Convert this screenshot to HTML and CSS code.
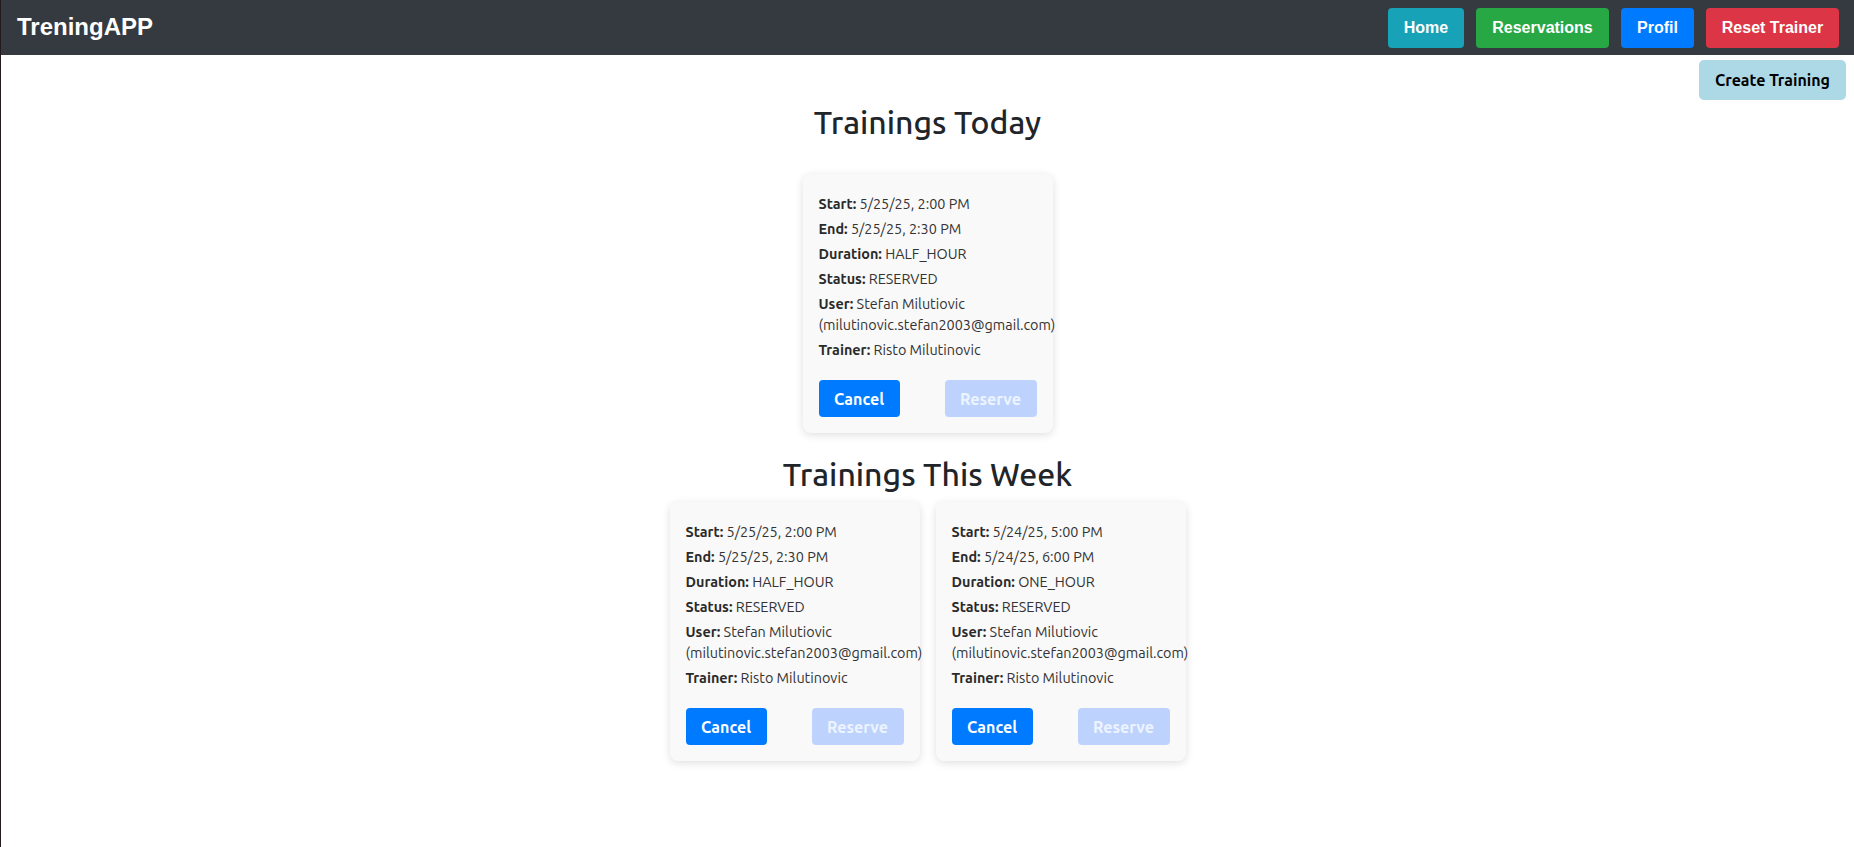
FILE: index.html
```html
<!DOCTYPE html>
<html>
<head>
<meta charset="utf-8">
<title>TreningAPP</title>
<link rel="stylesheet" href="styles.css">
</head>
<body>
<nav class="navbar">
  <div class="brand">TreningAPP</div>
  <div class="nav-buttons">
    <button class="nav-btn btn-home">Home</button>
    <button class="nav-btn btn-res">Reservations</button>
    <button class="nav-btn btn-profil">Profil</button>
    <button class="nav-btn btn-reset">Reset Trainer</button>
  </div>
</nav>
<div class="create-row">
  <button class="create-btn">Create Training</button>
</div>
<main class="main">
  <h2 class="section-title today-title">Trainings Today</h2>
  <div class="cards cards-today">
    <div class="card">
      <p><b>Start:</b> 5/25/25, 2:00 PM</p>
      <p><b>End:</b> 5/25/25, 2:30 PM</p>
      <p><b>Duration:</b> HALF_HOUR</p>
      <p><b>Status:</b> RESERVED</p>
      <p><b>User:</b> Stefan Milutiovic (milutinovic.stefan2003@gmail.com)</p>
      <p><b>Trainer:</b> Risto Milutinovic</p>
      <div class="actions">
        <button class="btn btn-cancel">Cancel</button>
        <button class="btn btn-reserve" disabled>Reserve</button>
      </div>
    </div>
  </div>
  <h2 class="section-title week-title">Trainings This Week</h2>
  <div class="cards cards-week">
    <div class="card">
      <p><b>Start:</b> 5/25/25, 2:00 PM</p>
      <p><b>End:</b> 5/25/25, 2:30 PM</p>
      <p><b>Duration:</b> HALF_HOUR</p>
      <p><b>Status:</b> RESERVED</p>
      <p><b>User:</b> Stefan Milutiovic (milutinovic.stefan2003@gmail.com)</p>
      <p><b>Trainer:</b> Risto Milutinovic</p>
      <div class="actions">
        <button class="btn btn-cancel">Cancel</button>
        <button class="btn btn-reserve" disabled>Reserve</button>
      </div>
    </div>
    <div class="card">
      <p><b>Start:</b> 5/24/25, 5:00 PM</p>
      <p><b>End:</b> 5/24/25, 6:00 PM</p>
      <p><b>Duration:</b> ONE_HOUR</p>
      <p><b>Status:</b> RESERVED</p>
      <p><b>User:</b> Stefan Milutiovic (milutinovic.stefan2003@gmail.com)</p>
      <p><b>Trainer:</b> Risto Milutinovic</p>
      <div class="actions">
        <button class="btn btn-cancel">Cancel</button>
        <button class="btn btn-reserve" disabled>Reserve</button>
      </div>
    </div>
  </div>
</main>
</body>
</html>
```

FILE: styles.css
```css
* { box-sizing: border-box; }
html, body { margin: 0; padding: 0; background: #fff; }
body {
  font-family: "Ubuntu", Lato, "Noto Sans", sans-serif;
  color: #212529;
  border-left: 1px solid #231a20;
  min-height: 847px;
}
.navbar {
  height: 55px;
  background: #343a40;
  display: flex;
  align-items: center;
  justify-content: space-between;
  padding: 0 15px 0 16px;
}
.brand {
  font-family: "Liberation Sans", Arial, sans-serif;
  font-weight: bold;
  font-size: 24px;
  color: #fff;
  margin-top: -1px;
}
.nav-buttons { display: flex; gap: 12px; }
.nav-btn {
  height: 40px;
  border: none;
  border-radius: 4px;
  padding: 0 15px;
  font-family: "Liberation Sans", Arial, sans-serif;
  font-weight: bold;
  font-size: 16px;
  color: #fff;
}
.btn-home { background: #17a2b8; width: 76px; }
.btn-res { background: #28a745; width: 133px; }
.btn-profil { background: #007bff; width: 73px; }
.btn-reset { background: #dc3545; width: 133px; }
.create-row {
  display: flex;
  justify-content: flex-end;
  padding: 5px 8px 0 0;
}
.create-btn {
  width: 147px;
  height: 40px;
  border: none;
  border-radius: 5px;
  background: #add8e6;
  color: #000;
  font-family: "Ubuntu", Lato, sans-serif;
  font-size: 16px;
  font-weight: 700;
}
.main { display: flex; flex-direction: column; align-items: center; }
.section-title {
  margin: 0;
  font-size: 32px;
  font-weight: 500;
  line-height: 38px;
  color: #212529;
  text-align: center;
}
.today-title { margin-top: 3px; }
.cards { display: flex; gap: 16px; justify-content: center; }
.cards-today { margin-top: 33px; }
.week-title { margin-top: 22px; }
.cards-week { margin-top: 9px; }
.card {
  width: 250px;
  background: #f9f9f9;
  border-radius: 8px;
  box-shadow: 0 2px 8px rgba(0,0,0,0.13);
  padding: 20px 16px 16px;
}
.card p {
  margin: 0 0 4px;
  font-size: 14.4px;
  line-height: 21px;
  color: #333;
}
.card p b { color: #2a2a2a; font-weight: 700; }
.actions {
  display: flex;
  justify-content: space-between;
  margin-top: 19px;
}
.btn {
  height: 37px;
  border: none;
  border-radius: 4px;
  font-family: "Ubuntu", Lato, sans-serif;
  font-size: 16px;
  font-weight: 700;
  color: #fff;
}
.btn-cancel { background: #007bff; width: 81px; }
.btn-reserve { background: #bdd3fd; width: 92px; color: #eef4ff; }
```
